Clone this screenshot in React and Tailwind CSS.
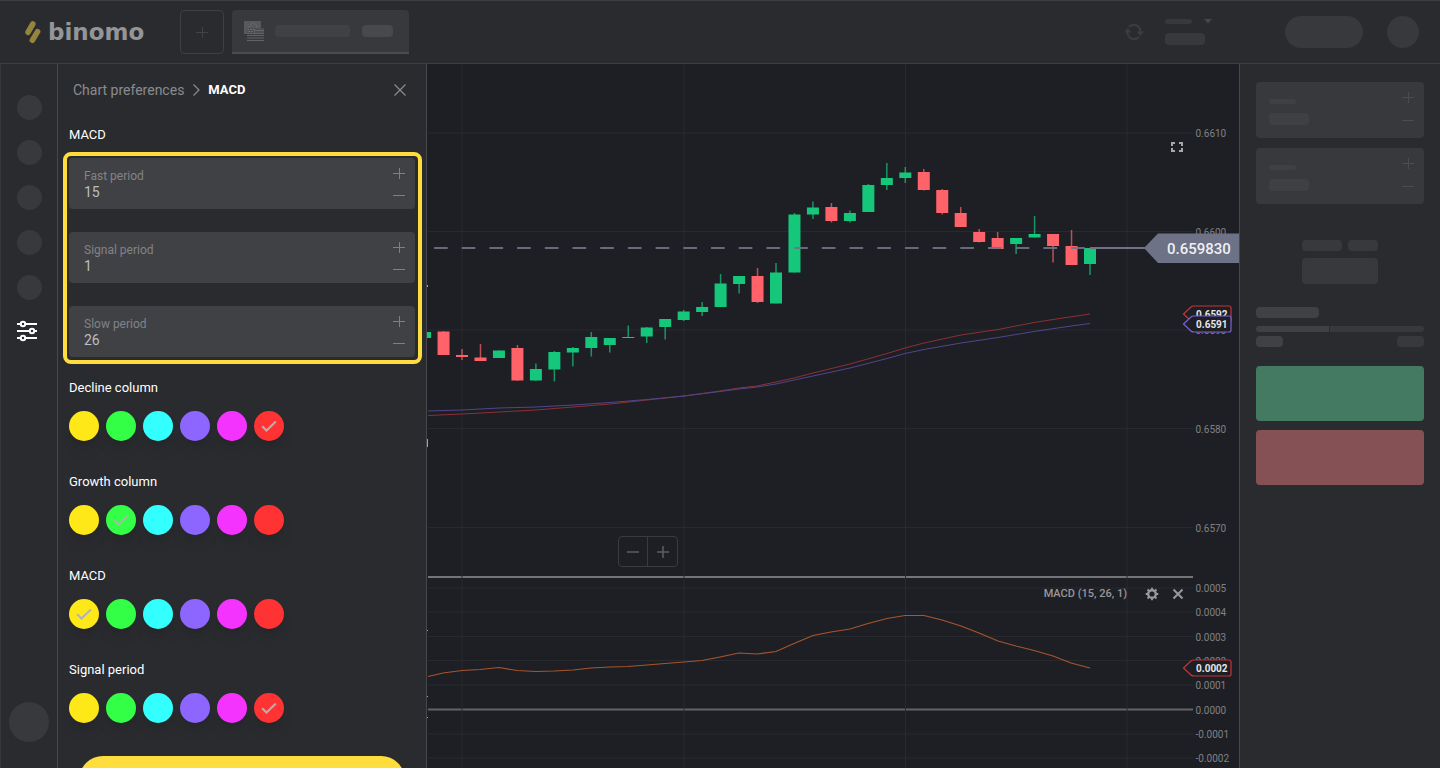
import React, { useState } from 'react';

const colors = [
  { name: 'Yellow', bg: 'bg-[#ffe818]' },
  { name: 'Green', bg: 'bg-[#33ff47]' },
  { name: 'Cyan', bg: 'bg-[#33ffff]' },
  { name: 'Purple', bg: 'bg-[#8c66ff]' },
  { name: 'Magenta', bg: 'bg-[#f533ff]' },
  { name: 'Red', bg: 'bg-[#ff3333]' },
];

// body top, body bottom, wick top, wick bottom, direction - newest candle first
const candles = [
  [248, 264, 248, 275, 'up'],
  [246, 265, 230, 265, 'down'],
  [234, 246, 234, 262.5, 'down'],
  [234, 237.5, 216, 237.5, 'up'],
  [238, 244, 238, 254, 'up'],
  [238, 249, 232, 249, 'down'],
  [232, 242, 229, 242.5, 'down'],
  [213, 227, 207, 227, 'down'],
  [190, 213, 189, 214.5, 'down'],
  [172, 190, 169, 190.5, 'down'],
  [172.5, 178, 167, 183, 'up'],
  [178, 185, 163, 190, 'up'],
  [185, 212, 184, 212, 'up'],
  [213, 221, 210.5, 222.5, 'up'],
  [207, 221, 203, 222.5, 'down'],
  [207.5, 214.5, 201.5, 219, 'up'],
  [214.5, 272.5, 213, 272.5, 'up'],
  [272.5, 303.5, 263, 303.5, 'up'],
  [276, 302, 268, 303, 'down'],
  [276, 284, 276, 293.5, 'up'],
  [283.5, 307, 274, 307, 'up'],
  [307, 312, 302, 316, 'up'],
  [311.5, 320, 310, 321, 'up'],
  [319, 327, 319, 339.5, 'up'],
  [327.5, 336.5, 327, 343, 'up'],
  [337, 338, 325.5, 338, 'up'],
  [338, 345, 338, 352.5, 'up'],
  [337, 348, 332, 356.5, 'up'],
  [348, 352.5, 347, 366.5, 'up'],
  [352, 369.5, 351, 381.5, 'up'],
  [369, 380.5, 363.5, 381, 'up'],
  [348, 380.5, 345, 381, 'down'],
  [350.5, 358, 350.5, 358, 'up'],
  [357.5, 361, 344, 361, 'down'],
  [355, 357, 349, 360, 'down'],
  [331.5, 355, 331, 355, 'down'],
  [332, 338, 332, 338, 'up'],
];

const priceAxis = [
  [133, '0.6610'],
  [231.5, '0.6600'],
  [330, '0.6590'],
  [428.5, '0.6580'],
  [527.5, '0.6570'],
];

const macdAxis = [
  [588, '0.0005'],
  [612, '0.0004'],
  [636.5, '0.0003'],
  [660.5, '0.0002'],
  [685, '0.0001'],
  [709.5, '0.0000'],
  [734, '-0.0001'],
  [758, '-0.0002'],
];

const Logo = () => (
  <a href="#" className="flex w-[155px] items-center gap-[6px]">
    <svg width="17" height="24" viewBox="0 0 17 24" fill="none" stroke="#94853c" strokeWidth="5.6" strokeLinecap="round">
      <path d="M3.1 12.2L7.8 4M7.4 20.2L12.6 11.6" />
    </svg>
    <span className="font-['DejaVu_Sans',sans-serif] text-[23px] leading-8 font-bold text-[#959597]">binomo</span>
  </a>
);

const FlagIcon = () => (
  <svg width="22" height="21" viewBox="0 0 22 21">
    <rect x="0" y="0" width="17" height="13" fill="#58595c" />
    <circle cx="9" cy="6.5" r="4" fill="none" stroke="#77787a" strokeDasharray="1 1.5" />
    <rect x="3" y="7" width="17" height="6" fill="#4c4d50" />
    <rect x="3" y="13" width="17" height="7" fill="#38393d" />
    <path d="M10 9.500h10M10 12.500h10M3 14.500h17M3 17h17M3 19.500h17" stroke="#636467" />
    <path d="M3.5 8.500h7M4.500 10.500h6M3.500 12.500h7" stroke="#77787a" strokeDasharray="1.4 1.4" />
  </svg>
);

const PlusGlyph = () => (
  <svg width="12" height="12" viewBox="0 0 12 12" stroke="currentColor">
    <path d="M0 6.5h12M6.5 1v11" />
  </svg>
);

const MinusGlyph = () => (
  <svg width="12" height="12" viewBox="0 0 12 12" stroke="currentColor">
    <path d="M0 6.5h12" />
  </svg>
);

const SyncIcon = () => (
  <svg width="20" height="16" viewBox="0 0 20 16" fill="none" stroke="currentColor" strokeWidth="2">
    <path d="M5 3A6.700 6.700 0 0 1 16.500 8" />
    <path d="M15 13A6.700 6.700 0 0 1 3.500 8" />
    <path d="M12.500 7.500h7.500l-3.700 4.500zM0 8.500h7.500L3.800 4z" fill="currentColor" stroke="none" />
  </svg>
);

const GearIcon = () => (
  <svg width="14" height="14" viewBox="0 0 14 14" fill="none" stroke="currentColor">
    <circle cx="7" cy="7" r="3.800" strokeWidth="2.400" />
    <path
      d="M7 .7V3M7 11v2.300M.7 7H3M11 7h2.300M2.500 2.500l1.700 1.700M9.800 9.800l1.700 1.700M2.500 11.500l1.700-1.700M9.800 4.200l1.700-1.700"
      strokeWidth="1.900"
    />
  </svg>
);

const Header = () => (
  <header className="flex h-16 shrink-0 items-center border-y border-[#3c3d41] bg-[#2a2b2f] pr-[21px] pl-[25px]">
    <Logo />
    <button aria-label="Add asset" className="flex size-11 items-center justify-center rounded border border-[#3e3f43] text-[#414246]">
      <PlusGlyph />
    </button>
    <div className="ml-2 flex h-11 w-[177px] items-center rounded-t border-b-2 border-[#4a4b4f] bg-[#38393d] pl-3">
      <FlagIcon />
      <div className="ml-[9px] h-3 w-[75px] rounded bg-[#404145]" />
      <div className="ml-3 h-3 w-[31px] rounded bg-[#48494c]" />
    </div>

    <div className="ml-auto flex items-center">
      <button aria-label="Refresh balance" className="mr-[21px] text-[#3b3c40]">
        <SyncIcon />
      </button>
      <div className="mr-[73px] w-[47px]">
        <div className="flex items-center justify-between">
          <div className="h-[5px] w-[27px] rounded-full bg-[#38393d]" />
          <svg width="8" height="5" viewBox="0 0 8 5" fill="#46474b"><path d="M0 0h8L4 4.500z" /></svg>
        </div>
        <div className="mt-[9px] h-3 w-10 rounded bg-[#38393d]" />
      </div>
      <div className="mr-6 h-8 w-[78px] rounded-full bg-[#38393d]" />
      <div className="size-8 rounded-full bg-[#38393d]" />
    </div>
  </header>
);

const Sidebar = () => (
  <nav className="flex w-[58px] shrink-0 flex-col items-center border-x border-l-[#36373b] border-r-[#47484c] bg-[#2a2b2f] pt-[31px] pb-[26px]">
    <div className="flex flex-col gap-5">
      <div className="size-[25px] rounded-full bg-[#38393d]" />
      <div className="size-[25px] rounded-full bg-[#38393d]" />
      <div className="size-[25px] rounded-full bg-[#38393d]" />
      <div className="size-[25px] rounded-full bg-[#38393d]" />
      <div className="size-[25px] rounded-full bg-[#38393d]" />
    </div>
    <button aria-label="Chart preferences" className="mt-5 mr-1">
      <svg width="20" height="22" viewBox="0 0 20 22" fill="none" stroke="#fff" strokeWidth="2">
        <path d="M0 4h3.500M8.500 4H20M0 11h12.500M17.500 11H20M0 18h3.500M8.500 18H20" />
        <circle cx="6" cy="4" r="2.200" />
        <circle cx="15" cy="11" r="2.200" />
        <circle cx="6" cy="18" r="2.200" />
      </svg>
    </button>
    <div className="mt-auto size-10 rounded-full bg-[#38393d]" />
  </nav>
);

const PeriodField = ({ id, label, initial }) => {
  const [value, setValue] = useState(initial);

  return (
    <div className="flex h-[51px] items-center justify-between rounded bg-[#404145] pr-[10px] pl-[15px]">
      <div className="flex flex-1 flex-col">
        <label htmlFor={id} className="text-xs leading-4 text-[#828386]">{label}</label>
        <input
          id={id}
          value={value}
          onChange={(e) => setValue(Number(e.target.value) || 0)}
          className="w-full bg-transparent text-sm leading-4 text-[#bdbdbf] outline-none"
        />
      </div>
      <div className="flex flex-col text-[#7e7f82]">
        <button aria-label={`Increase ${label}`} onClick={() => setValue(value + 1)} className="flex h-[22px] items-center">
          <PlusGlyph />
        </button>
        <button aria-label={`Decrease ${label}`} onClick={() => setValue(value - 1)} className="flex h-[22px] items-center">
          <MinusGlyph />
        </button>
      </div>
    </div>
  );
};

const ColorPicker = ({ id, title, initial }) => {
  const [selected, setSelected] = useState(initial);

  return (
    <div role="radiogroup" aria-label={title}>
      <h3 className="text-[13px] leading-5 text-white">{title}</h3>
      <div className="mt-[13px] flex gap-[7px]">
        {colors.map((color) => (
          <label key={color.name} className="grid cursor-pointer place-items-center">
            <input
              type="radio"
              name={id}
              aria-label={`${title} ${color.name}`}
              checked={selected === color.name}
              onChange={() => setSelected(color.name)}
              className={`col-start-1 row-start-1 size-[30px] appearance-none rounded-full shadow-lg ${color.bg}`}
            />
            {selected === color.name && (
              <svg className="pointer-events-none z-10 col-start-1 row-start-1" width="16" height="12" viewBox="0 0 16 12" fill="none" stroke="#b3b3b3" strokeWidth="2">
                <path d="M1.200 6.200L5.500 10.500L14.800 1.500" />
              </svg>
            )}
          </label>
        ))}
      </div>
    </div>
  );
};

const SettingsPanel = () => (
  <section className="flex w-[369px] shrink-0 flex-col overflow-hidden border-r border-[#47484c] bg-[#2a2b2f]">
    <div className="mt-4 flex items-center pr-5 pl-[15px] text-sm leading-5">
      <a href="#" className="text-[#8a8b8e]">Chart preferences</a>
      <svg className="mx-2" width="8" height="12" viewBox="0 0 8 12" fill="none" stroke="#8a8b8e" strokeWidth="1.200">
        <path d="M1.500 .5L7 6L1.500 11.500" />
      </svg>
      <h2 className="text-[13px] font-bold text-white">MACD</h2>
      <button aria-label="Close" className="ml-auto text-[#8a8b8e]">
        <svg width="12" height="12" viewBox="0 0 12 12" stroke="currentColor" strokeWidth="1.2"><path d="M.5 .5l11 11M11.500 .5l-11 11" /></svg>
      </button>
    </div>

    <h3 className="mt-[25px] px-[11px] text-[13px] leading-5 text-white">MACD</h3>

    {/* Highlighted periods */}
    <div className="mr-1 ml-[5px] mt-[7px] flex flex-col gap-[23px] rounded-lg border-4 border-[#ffdd3c] pt-0.5 pr-[3px] pb-[3px] pl-0.5">
      <PeriodField id="fast" label="Fast period" initial={15} />
      <PeriodField id="signal" label="Signal period" initial={1} />
      <PeriodField id="slow" label="Slow period" initial={26} />
    </div>

    <div className="mt-[14px] flex flex-col gap-[31px] px-[11px]">
      <ColorPicker id="decline-color" title="Decline column" initial="Red" />
      <ColorPicker id="growth-color" title="Growth column" initial="Green" />
      <ColorPicker id="macd-color" title="MACD" initial="Yellow" />
      <ColorPicker id="signal-color" title="Signal period" initial="Red" />
    </div>

    <button aria-label="Apply" className="mx-[21px] mt-[33px] h-12 shrink-0 rounded-full bg-[#ffdd3c]" />
  </section>
);

const ValueTag = ({ y, value, color }) => (
  <g>
    <path
      d={`M1183.500 ${y}L1191 ${y - 7}Q1192 ${y - 8} 1194 ${y - 8}H1229Q1231 ${y - 8} 1231 ${y - 6}V${y + 6}Q1231 ${y + 8} 1229 ${y + 8}H1194Q1192 ${y + 8} 1191 ${y + 7}Z`}
      fill="#1e1f24"
      stroke={color}
      strokeWidth="1.2"
    />
    <text x="1196" y={y + 4} fontSize="10" fontWeight="700" fill="#e6e6e8">{value}</text>
  </g>
);

const Chart = () => (
  <main className="relative min-w-0 flex-1 overflow-hidden bg-[#1e1f24]">
    <svg className="block h-full w-full" viewBox="427 64 812 704" preserveAspectRatio="xMaxYMin slice" fontFamily="Roboto, sans-serif">
      {/* Grid and axis labels */}
      {[...priceAxis, ...macdAxis].map(([y, label]) => (
        <g key={label}>
          <path d={`M428 ${y}H1193`} stroke="#292a2e" />
          <text x="1195.500" y={y + 4} fontSize="10" fill="#808184">{label}</text>
        </g>
      ))}
      <path d="M428 577H1193" stroke="#929395" strokeWidth="1.500" />
      <path d="M428 709.500H1193" stroke="#626366" strokeWidth="2" />
      <path d="M462 64V768M684 64V768M905.500 64V768M1127 64V768" stroke="#292a2e" />

      {/* Moving averages */}
      <polyline
        fill="none"
        stroke="#8c3034"
        points="428,415.5 462,414 499,412 536,410 573,407 610,404 647,400 684,396 720,391 739,388 757,386 776,382 794,378 813,373 850,364 887,353.500 905,348 924,343 961,335 998,329.500 1034,322.500 1053,319.500 1090,314"
      />
      <polyline
        fill="none"
        stroke="#51458c"
        points="428,411 462,410 499,408 536,407 573,405 610,402.5 647,399.5 684,396 720,391.5 739,389 757,387 776,384 794,380 813,376 850,368 887,358.500 905,353.500 924,349.500 961,343 998,337.500 1034,331.500 1071,326 1090,323.500"
      />

      {candles.map(([top, bottom, wickTop, wickBottom, dir], i) => {
        const x = 1090 - i * 18.47;
        const fill = dir === 'up' ? '#15c77b' : '#ff6369';
        return (
          <g key={i} fill={fill}>
            <rect x={x - 0.75} y={wickTop} width="1.500" height={wickBottom - wickTop} opacity="0.7" />
            <rect x={x - 6} y={top} width="12" height={Math.max(bottom - top, 1)} />
          </g>
        );
      })}

      {/* Current price */}
      <path d="M434 248H1087" stroke="#6f7286" strokeWidth="2" strokeDasharray="13.7 14" opacity="0.9" />
      <path d="M1090 248H1146" stroke="#6f7286" strokeWidth="2" />
      <path d="M1144 248L1158 233.500H1239V263H1158Z" fill="#6d7287" />
      <text x="1167" y="254" fontSize="15" fontWeight="500" fill="#f0f0f2">0.659830</text>

      <ValueTag y={314} value="0.6592" color="#c23438" />
      <ValueTag y={324} value="0.6591" color="#7a5fd6" />

      {/* MACD line */}
      <polyline
        fill="none"
        stroke="#a8552d"
        strokeWidth="1.200"
        points="428,676.500 443,673 462,670.500 480,669.500 499,667.500 517,670.500 536,671.500 554,671 573,670 591,668 610,667 628,666.500 647,665 665,663.500 684,662 702,660.500 720,657 739,653 757,654 776,651.500 794,643.500 813,635.500 831,632 850,629 868,623.500 887,618.500 905,615.500 924,615.500 942,620 961,626 979,633 998,641 1016,646 1034,650.500 1053,656 1071,663 1090,668"
      />
      <ValueTag y={668} value="0.0002" color="#c23438" />

      <path d="M427.500 285v2M427.500 630v1M427.500 696v1M427.500 717v1" stroke="#a0a1a3" />
      <path d="M427.500 439v8" stroke="#8fa6dc" />
    </svg>

    <button aria-label="Full screen" className="absolute top-[76px] right-[55px] text-[#a6a7a9]">
      <svg width="14" height="14" viewBox="0 0 14 14" fill="none" stroke="currentColor" strokeWidth="2">
        <path d="M2 6V3h3M9 3h3v3M12 8v3H9M5 11H2V8" />
      </svg>
    </button>

    <div className="absolute top-[472px] left-[191px] flex divide-x divide-[#3a3b3f] rounded border border-[#3a3b3f] text-[#5e5f63]">
      <button aria-label="Zoom out" className="flex h-[29px] w-[29px] items-center justify-center">
        <svg width="14" height="14" viewBox="0 0 14 14" stroke="currentColor" strokeWidth="1.500"><path d="M1 7h12" /></svg>
      </button>
      <button aria-label="Zoom in" className="flex h-[29px] w-[29px] items-center justify-center">
        <svg width="14" height="14" viewBox="0 0 14 14" stroke="currentColor" strokeWidth="1.500"><path d="M1 7h12M7 1v12" /></svg>
      </button>
    </div>

    <div className="absolute top-[522px] right-[55px] flex items-center text-[11px] leading-4 font-medium text-[#97989a]">
      <span>MACD (15, 26, 1)</span>
      <button aria-label="Indicator settings" className="ml-[18px]"><GearIcon /></button>
      <button aria-label="Remove indicator" className="ml-[13px]">
        <svg width="12" height="12" viewBox="0 0 12 12" stroke="currentColor" strokeWidth="2"><path d="M1.500 1.500l9 9M10.500 1.500l-9 9" /></svg>
      </button>
    </div>
  </main>
);

const DealCard = () => (
  <div className="flex h-14 items-center justify-between rounded bg-[#38393d] pr-[10px] pl-[13px]">
    <div className="flex flex-col gap-[9px] pt-1">
      <div className="h-[5px] w-[27px] rounded-full bg-[#3f4044]" />
      <div className="h-3 w-10 rounded bg-[#3f4044]" />
    </div>
    <div className="flex flex-col gap-[11px] pb-1 text-[#4b4c50]">
      <button aria-label="Increase"><PlusGlyph /></button>
      <button aria-label="Decrease"><MinusGlyph /></button>
    </div>
  </div>
);

const DealPanel = () => (
  <aside className="w-[201px] shrink-0 border-l border-[#47484c] bg-[#2a2b2f] px-4 pt-[18px]">
    <div className="flex flex-col gap-[10px]">
      <DealCard />
      <DealCard />
    </div>

    <div className="mx-auto mt-9 w-[76px]">
      <div className="flex gap-1.5">
        <div className="h-[11px] w-10 rounded bg-[#38393d]" />
        <div className="h-[11px] flex-1 rounded bg-[#38393d]" />
      </div>
      <div className="mt-[7px] h-[26px] rounded bg-[#38393d]" />
    </div>

    <div className="mt-[23px] h-[11px] w-[63px] rounded bg-[#404145]" />
    <div className="mt-2 flex gap-px overflow-hidden rounded-full">
      <div className="h-1.5 w-[73px] bg-[#404145]" />
      <div className="h-1.5 flex-1 bg-[#38393d]" />
    </div>
    <div className="mt-1 flex justify-between">
      <div className="h-[11px] w-[27px] rounded bg-[#404145]" />
      <div className="h-[11px] w-[27px] rounded bg-[#38393d]" />
    </div>

    <div className="mt-[19px] flex flex-col gap-[9px]">
      <button aria-label="Up" className="h-[55px] rounded bg-[#437a61]" />
      <button aria-label="Down" className="h-[55px] rounded bg-[#865154]" />
    </div>
  </aside>
);

const App = () => {
  return (
    <div className="flex h-screen flex-col overflow-hidden bg-[#1e1f24] font-[Roboto,sans-serif]">
      <Header />
      <div className="flex min-h-0 flex-1">
        <Sidebar />
        <SettingsPanel />
        <Chart />
        <DealPanel />
      </div>
    </div>
  );
};

export default App;
